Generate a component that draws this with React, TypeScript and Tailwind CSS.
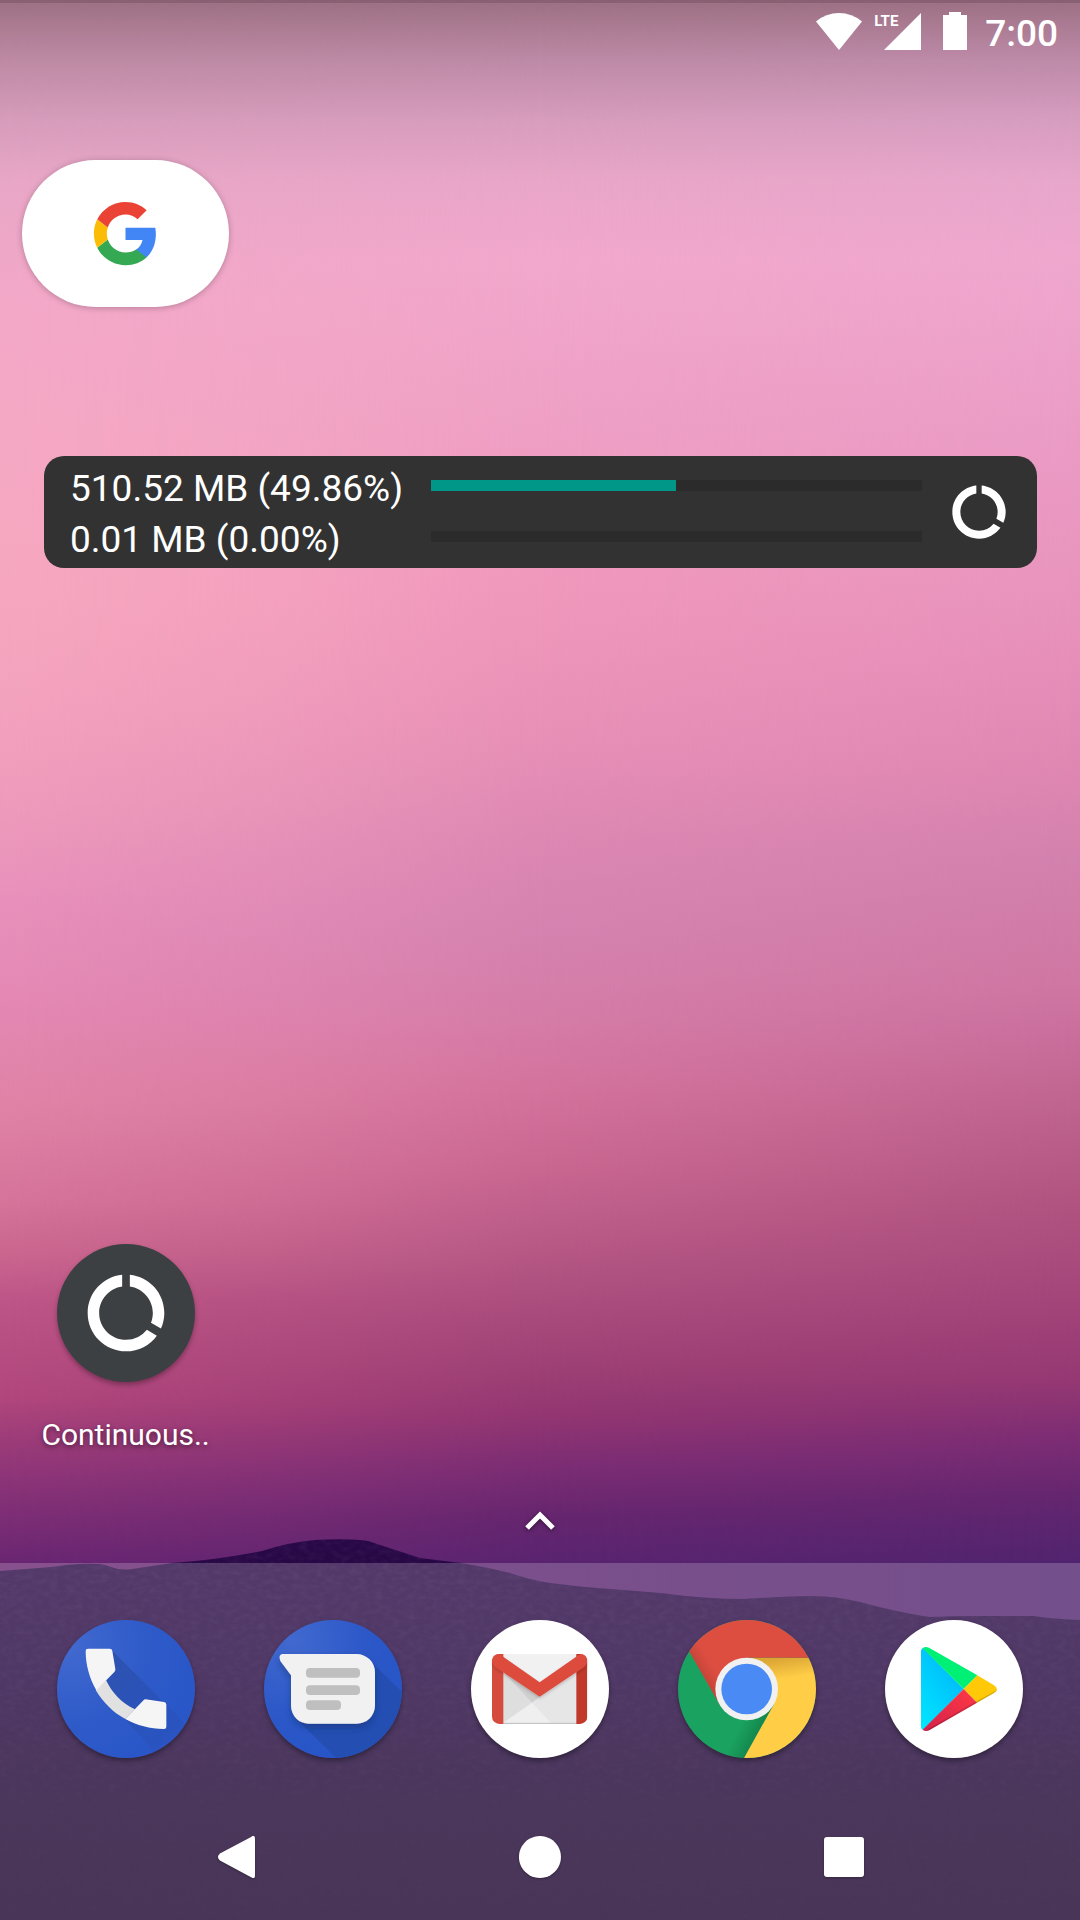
import type { ReactNode } from "react";
import { MdDataUsage } from "react-icons/md";

type Stop = [number, string];

const leftSky: Stop[] = [
  [0, "#9c7083"], [60, "#bd8aa4"], [120, "#d69cba"], [180, "#e8a6c6"], [300, "#f3a8c8"],
  [440, "#f5a8c3"], [600, "#f6a7bf"], [700, "#f3a2bd"], [800, "#ee9bbb"], [900, "#e890bb"],
  [1000, "#e488b4"], [1100, "#e083a6"], [1200, "#d6749a"], [1250, "#cb678f"], [1300, "#bd5587"],
  [1400, "#b0467c"], [1440, "#9c3c78"], [1480, "#8c3478"], [1520, "#7b2d74"], [1563, "#6a2672"],
];
const midSky: Stop[] = [
  [0, "#9c7083"], [60, "#bd8aa6"], [120, "#d89dbd"], [180, "#e9a6c8"], [260, "#f2a8cc"],
  [440, "#ef9fc4"], [580, "#f198bd"], [650, "#ee95ba"], [740, "#e890b7"], [840, "#dd88b3"],
  [930, "#d583b0"], [1020, "#d57ca7"], [1090, "#d4739d"], [1170, "#c96791"], [1270, "#b25482"],
  [1370, "#9d4075"], [1416, "#933672"], [1460, "#7f2e74"], [1517, "#66266f"], [1563, "#5a2470"],
];
const rightSky: Stop[] = [
  [0, "#9c7083"], [60, "#bd8aa8"], [120, "#d69dc0"], [180, "#e7a6cb"], [260, "#efa7ce"],
  [440, "#ea9bc5"], [580, "#e895bd"], [680, "#e58db8"], [767, "#df87b2"], [861, "#d281ad"],
  [986, "#cf76a2"], [1030, "#ca6f9d"], [1111, "#bd638d"], [1205, "#b05380"], [1299, "#a3457a"],
  [1380, "#953873"], [1436, "#7d2d74"], [1499, "#63266f"], [1563, "#51246f"],
];

function SkyGradient({ id, stops }: { id: string; stops: Stop[] }) {
  return (
    <linearGradient id={id} gradientUnits="userSpaceOnUse" x1="0" y1="0" x2="0" y2="1563">
      {stops.map(([y, color]) => (
        <stop key={y} offset={y / 1563} stopColor={color} />
      ))}
    </linearGradient>
  );
}

function Wallpaper() {
  return (
    <svg
      className="absolute inset-0 -z-10 h-full w-full"
      viewBox="0 0 1080 1920"
      preserveAspectRatio="none"
      aria-hidden="true"
    >
      <defs>
        <SkyGradient id="skyLeft" stops={leftSky} />
        <SkyGradient id="skyMid" stops={midSky} />
        <SkyGradient id="skyRight" stops={rightSky} />
        <linearGradient id="fadeLeft">
          <stop offset="0" stopColor="#fff" />
          <stop offset="0.25" stopColor="#999" />
          <stop offset="0.5" stopColor="#000" />
        </linearGradient>
        <linearGradient id="fadeRight">
          <stop offset="0.5" stopColor="#000" />
          <stop offset="1" stopColor="#fff" />
        </linearGradient>
        <mask id="maskLeft">
          <rect width="1080" height="1920" fill="url(#fadeLeft)" />
        </mask>
        <mask id="maskRight">
          <rect width="1080" height="1920" fill="url(#fadeRight)" />
        </mask>
        <linearGradient id="hill" x1="0" y1="0" x2="0" y2="1">
          <stop offset="0" stopColor="#280846" />
          <stop offset="0.35" stopColor="#240740" />
          <stop offset="0.7" stopColor="#1d0532" />
          <stop offset="1" stopColor="#1b032e" />
        </linearGradient>
        <filter id="grain" x="0" y="0" width="1" height="1">
          <feTurbulence type="fractalNoise" baseFrequency="0.12 0.2" numOctaves="3" seed="4" />
          <feColorMatrix values="0 0 0 0 0.6  0 0 0 0 0.35  0 0 0 0 0.65  0.5 0 0 0 -0.17" />
          <feComposite in2="SourceGraphic" operator="in" />
        </filter>
        <linearGradient id="grainFade" gradientUnits="userSpaceOnUse" x1="0" y1="1560" x2="0" y2="1860">
          <stop offset="0" stopColor="#fff" />
          <stop offset="1" stopColor="#333" />
        </linearGradient>
        <mask id="grainMask">
          <rect width="1080" height="1920" fill="url(#grainFade)" />
        </mask>
        <path
          id="ridge"
          d="M0 1571 L52 1567 L66 1565 Q100 1562 108 1566 Q120 1571 132 1569 L172 1563 Q215 1560 262 1551 Q290 1542 315 1540 Q350 1538 368 1541 Q395 1550 420 1558 L461 1563 Q486 1567 510 1573 Q530 1580 550 1583 L585 1587 L661 1593 Q705 1599 744 1599 Q790 1596 813 1596 Q835 1596 860 1602 Q900 1613 930 1617 Q955 1616 978 1616 L1033 1616 Q1055 1619 1080 1620 V1920 H0 Z"
        />
      </defs>
      <rect width="1080" height="1920" fill="url(#skyMid)" />
      <rect width="1080" height="1920" fill="url(#skyLeft)" mask="url(#maskLeft)" />
      <rect width="1080" height="1920" fill="url(#skyRight)" mask="url(#maskRight)" />
      <rect width="1080" height="3" fill="#5e3a4c" opacity="0.3" />
      <use href="#ridge" fill="url(#hill)" />
      <g mask="url(#grainMask)">
        <use href="#ridge" fill="#000" filter="url(#grain)" opacity="0.26" />
      </g>
    </svg>
  );
}

function StatusBar() {
  return (
    <header className="flex h-[62px] items-start justify-end pr-[22px] pt-3 text-white">
      <svg className="mt-px h-[37px] w-[46px]" viewBox="0 0 46 37" fill="currentColor" role="img" aria-label="Wi-Fi">
        <path d="M0 8.500Q10 0 23 0T46 8.500L23 37Z" />
      </svg>
      <div className="relative ml-3 mt-px h-[37px] w-[47px]">
        <svg className="ml-auto h-[37px] w-[37px]" viewBox="0 0 37 37" fill="currentColor" aria-hidden="true">
          <path d="M37 0V37H0Z" />
        </svg>
        <span className="absolute left-0 top-0 text-[15px] font-bold leading-4">LTE</span>
      </div>
      <svg className="ml-[22px] h-[38px] w-6" viewBox="0 0 24 38" fill="currentColor" role="img" aria-label="Battery full">
        <path d="M6 0H18V3H24V38H0V3H6Z" />
      </svg>
      <time className="ml-[18px] text-[37px] font-medium leading-[44px]">7:00</time>
    </header>
  );
}

function GoogleLogo() {
  return (
    <svg className="h-[69px] w-[69px]" viewBox="0 0 24 24" aria-hidden="true">
      <path fill="#4285f4" d="M22.56 12.25c0-.78-.07-1.53-.2-2.25H12v4.26h5.920c-.26 1.370-1.040 2.530-2.210 3.310v2.770h3.570c2.080-1.920 3.280-4.740 3.280-8.090z" />
      <path fill="#34a853" d="M12 23c2.970 0 5.460-.98 7.280-2.660l-3.570-2.770c-.98.66-2.230 1.060-3.710 1.060-2.860 0-5.290-1.930-6.160-4.530L2.180 16.930C3.990 20.530 7.700 23 12 23z" />
      <path fill="#fbbc05" d="M5.840 14.090c-.22-.66-.35-1.360-.35-2.090s.13-1.430.35-2.090L2.180 7.070C1.430 8.550 1 10.220 1 12s.43 3.450 1.180 4.930z" />
      <path fill="#ea4335" d="M12 5.380c1.620 0 3.060.56 4.210 1.640l3.150-3.150C17.450 2.090 14.970 1 12 1 7.700 1 3.990 3.470 2.180 7.070l3.660 2.840c.87-2.600 3.300-4.530 6.160-4.530z" />
    </svg>
  );
}

const usage = [
  { text: "510.52 MB (49.86%)", percent: 49.86 },
  { text: "0.01 MB (0.00%)", percent: 0 },
];

function UsageWidget() {
  return (
    <section className="ml-[44px] mr-[43px] flex items-center rounded-[20px] bg-[#323232] py-[5px] pl-[26px] pr-[26px] text-white">
      <div className="flex-1">
        {usage.map((row) => (
          <div key={row.text} className="flex h-[51px] items-start">
            <span className="w-[361px] whitespace-nowrap text-[37px] leading-[55px]">{row.text}</span>
            <div
              className="mt-[19px] h-[11px] flex-1 bg-[#2b2b2b]"
              role="progressbar"
              aria-label={row.text}
              aria-valuenow={row.percent}
            >
              <div className="h-full bg-[#009688]" style={{ width: `${row.percent}%` }} />
            </div>
          </div>
        ))}
      </div>
      <button type="button" aria-label="Refresh data usage" className="ml-[25px]">
        <MdDataUsage className="h-16 w-16" />
      </button>
    </section>
  );
}

function PhoneIcon() {
  return (
    <svg className="h-full w-full" viewBox="52 60 414 414" aria-hidden="true">
      <defs>
        <radialGradient id="phoneBg" cx="0.1" cy="0.2" r="0.9">
          <stop offset="0" stopColor="#4169cf" />
          <stop offset="0.6" stopColor="#2f5bc9" />
          <stop offset="1" stopColor="#2a57c8" />
        </radialGradient>
        <linearGradient id="phoneShade" gradientUnits="userSpaceOnUse" x1="190" y1="190" x2="400" y2="430">
          <stop offset="0" stopColor="#23408f" stopOpacity="0.45" />
          <stop offset="1" stopColor="#23408f" stopOpacity="0.1" />
        </linearGradient>
      </defs>
      <rect x="52" y="60" width="414" height="414" fill="url(#phoneBg)" />
      <path d="M218 152L466 400V474H362L257 360L199 243L227 212Z" fill="url(#phoneShade)" />
      <path d="M199 240C215 275 245 310 286 328L257 357C220 337 190 307 168 270Z" fill="#e1e1e1" />
      <path d="M138 153Q138 146 145 146H210Q217 146 218 153L227 207Q228 212 224 216L170 271C150 236 138 195 138 153Z" fill="#f5f5f5" />
      <path d="M318 298L373 306Q380 307 380 314V380Q380 387 373 387C330 387 292 376 257 357L310 302Q314 298 318 298Z" fill="#f5f5f5" />
    </svg>
  );
}

function MessagesIcon() {
  return (
    <svg className="h-full w-full" viewBox="672 60 414 414" aria-hidden="true">
      <defs>
        <radialGradient id="msgBg" cx="0.2" cy="0.15" r="0.9">
          <stop offset="0" stopColor="#4169cf" />
          <stop offset="0.6" stopColor="#2c58c8" />
          <stop offset="1" stopColor="#2755c7" />
        </radialGradient>
        <filter id="msgShadow" x="-20%" y="-20%" width="140%" height="150%">
          <feDropShadow dx="0" dy="12" stdDeviation="10" floodColor="#142f73" floodOpacity="0.5" />
        </filter>
      </defs>
      <rect x="672" y="60" width="414" height="414" fill="url(#msgBg)" />
      <path d="M990 182L1086 276V474H888L768 355Z" fill="#234cad" fillOpacity="0.8" />
      <path
        d="M727 162H950A55 55 0 0 1 1005 217V317A55 54 0 0 1 950 371H806A53 54 0 0 1 753 317V226L721 183Q714 164 727 162Z"
        fill="#f1f1f1"
        filter="url(#msgShadow)"
      />
      <g fill="#bfbfbf">
        <rect x="798" y="204" width="162" height="29" rx="12" />
        <rect x="798" y="256" width="162" height="29" rx="12" />
        <rect x="798" y="301" width="105" height="29" rx="12" />
      </g>
    </svg>
  );
}

function GmailIcon() {
  return (
    <svg className="h-full w-full" viewBox="64 60 414 414" aria-hidden="true">
      <defs>
        <filter id="foldShadow" x="-10%" y="-10%" width="120%" height="150%">
          <feDropShadow dx="0" dy="5" stdDeviation="5" floodColor="#000" floodOpacity="0.2" />
        </filter>
        <clipPath id="mailClip">
          <rect x="127" y="162" width="286" height="210" rx="22" />
        </clipPath>
      </defs>
      <rect x="64" y="60" width="414" height="414" fill="#fff" />
      <rect x="150" y="162" width="240" height="210" fill="#e6e6e6" />
      <path d="M150 162H390L270 250Z" fill="#f1f1f1" />
      <path d="M160 215L247 308L160 368Z" fill="#dedede" />
      <path d="M160 215L270 290L247 308Z" fill="#cfcfcf" />
      <path d="M160 370L247 308L306 371Z" fill="#efefef" />
      <path d="M160 370H381" stroke="#bdbdbd" strokeWidth="3" />
      <g clipPath="url(#mailClip)">
        <path d="M127 162H161V372H127Z" fill="#d54b3e" />
        <path d="M380 162H413V372H380Z" fill="#c1392b" />
      </g>
      <path
        d="M128 184Q128 163 146 163Q151 163 156 167L270 247L384 167Q389 163 394 163Q412 163 412 184Q412 195 402 202L270 290L138 202Q128 195 128 184Z"
        fill="#dd4b3e"
        filter="url(#foldShadow)"
      />
    </svg>
  );
}

function ChromeIcon() {
  return (
    <svg className="h-full w-full" viewBox="685 60 414 414" aria-hidden="true">
      <defs>
        <linearGradient id="chromeRed" gradientUnits="userSpaceOnUse" x1="735" y1="255" x2="800" y2="215">
          <stop offset="0" stopColor="#b33c31" />
          <stop offset="1" stopColor="#dd4e41" />
        </linearGradient>
        <linearGradient id="chromeGreen" gradientUnits="userSpaceOnUse" x1="935" y1="415" x2="870" y2="382">
          <stop offset="0" stopColor="#128049" />
          <stop offset="1" stopColor="#1aa260" />
        </linearGradient>
        <linearGradient id="chromeYellow" gradientUnits="userSpaceOnUse" x1="1000" y1="172" x2="1010" y2="235">
          <stop offset="0" stopColor="#dba534" />
          <stop offset="1" stopColor="#ffcd46" />
        </linearGradient>
      </defs>
      <rect x="685" y="60" width="414" height="414" fill="url(#chromeGreen)" />
      <path d="M891 173H1100V476H882L972 314Z" fill="url(#chromeYellow)" />
      <path d="M891 173H1100V50H670L720 157L810 314Z" fill="url(#chromeRed)" />
      <circle cx="891" cy="267" r="94" fill="#f1f1f1" />
      <circle cx="891" cy="267" r="76" fill="#4a8af4" />
    </svg>
  );
}

function PlayIcon() {
  return (
    <svg className="h-full w-full" viewBox="76 60 414 414" aria-hidden="true">
      <defs>
        <linearGradient id="playBlue" x1="0.8" y1="0" x2="0.1" y2="1">
          <stop offset="0" stopColor="#00b4fa" />
          <stop offset="1" stopColor="#00e5ff" />
        </linearGradient>
        <linearGradient id="playRed" x1="1" y1="0" x2="0" y2="1">
          <stop offset="0" stopColor="#ff3a44" />
          <stop offset="1" stopColor="#d3204c" />
        </linearGradient>
      </defs>
      <rect x="76" y="60" width="414" height="414" fill="#fff" />
      <path d="M190 144Q184 147 184 154V380Q184 387 190 390L312 267Z" fill="url(#playBlue)" />
      <path d="M189 145Q196 138 208 143L353 226L312 267Z" fill="#00f076" />
      <path d="M353 226L403 256Q412 262 412 268T403 279L352 308L312 267Z" fill="#ffc907" />
      <path d="M189 389L312 267L352 308L210 390Q197 396 189 389Z" fill="url(#playRed)" />
      <path d="M200 393Q204 393 210 390L352 308L403 279Q411 274 412 268Q410 272 403 275L350 304L206 387Z" fill="#000" fillOpacity="0.16" />
    </svg>
  );
}

const dockApps: { name: string; icon: ReactNode }[] = [
  { name: "Phone", icon: <PhoneIcon /> },
  { name: "Messages", icon: <MessagesIcon /> },
  { name: "Gmail", icon: <GmailIcon /> },
  { name: "Chrome", icon: <ChromeIcon /> },
  { name: "Play Store", icon: <PlayIcon /> },
];

const navButtons = [
  { name: "Back", d: "M39 3V45Q39 50 35 47L3 28Q-1 24 3 20L35 1Q39 -2 39 3Z", box: "0 0 39 48", size: "h-[42px] w-[38px]" },
  { name: "Home", d: "M21 0A21 21 0 1 1 20.900 0Z", box: "0 0 42 42", size: "h-[42px] w-[42px]" },
  { name: "Overview", d: "M3 0H37Q40 0 40 3V37Q40 40 37 40H3Q0 40 0 37V3Q0 0 3 0Z", box: "0 0 40 40", size: "h-10 w-10" },
];

export default function App() {
  return (
    <main className="relative isolate flex min-h-screen flex-col overflow-hidden font-[Roboto,sans-serif]">
      <Wallpaper />
      <StatusBar />
      <button
        type="button"
        aria-label="Google search"
        className="ml-[22px] mt-[98px] flex h-[147px] w-[207px] items-center justify-center rounded-full bg-white shadow-[0_1px_6px_rgba(0,0,0,0.25)]"
      >
        <GoogleLogo />
      </button>
      <div className="mt-[149px]">
        <UsageWidget />
      </div>
      <div className="mt-auto grid grid-cols-5 px-[22px]">
        <button type="button" className="flex flex-col items-center text-white">
          <span className="flex h-[138px] w-[138px] items-center justify-center rounded-full bg-[#3c4043] shadow-[0_3px_5px_rgba(0,0,0,0.3)]">
            <MdDataUsage className="h-[92px] w-[92px]" />
          </span>
          <span className="mt-8 text-[30px] leading-[42px] [text-shadow:0_2px_5px_rgba(0,0,0,0.5)]">Continuous..</span>
        </button>
      </div>
      <button type="button" aria-label="All apps" className="mx-auto mb-[29px] mt-[50px] h-7 w-10">
        <svg className="h-full w-full drop-shadow-[0_1px_2px_rgba(0,0,0,0.5)]" viewBox="0 0 40 28" fill="none" stroke="#fff" strokeWidth="5" aria-hidden="true">
          <path d="M7 22L20 9L33 22" />
        </svg>
      </button>
      <footer className="bg-white/20 pb-[42px] pt-[57px]">
        <nav aria-label="Favourite apps" className="grid grid-cols-5 justify-items-center px-[22px]">
          {dockApps.map((app) => (
            <button
              key={app.name}
              type="button"
              aria-label={app.name}
              className="h-[138px] w-[138px] overflow-hidden rounded-full shadow-[0_3px_5px_rgba(0,0,0,0.35)]"
            >
              {app.icon}
            </button>
          ))}
        </nav>
        <nav aria-label="System" className="mt-[78px] grid grid-cols-3 items-center justify-items-center px-[84px]">
          {navButtons.map((button) => (
            <button key={button.name} type="button" aria-label={button.name} className={button.size}>
              <svg className="h-full w-full drop-shadow-[0_1px_1px_rgba(0,0,0,0.3)]" viewBox={button.box} preserveAspectRatio="none" fill="#fff" aria-hidden="true">
                <path d={button.d} />
              </svg>
            </button>
          ))}
        </nav>
      </footer>
    </main>
  );
}
